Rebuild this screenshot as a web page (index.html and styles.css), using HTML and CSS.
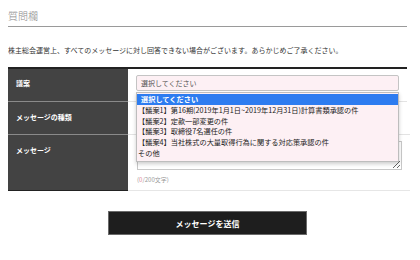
FILE: index.html
```html
<!DOCTYPE html>
<html lang="ja">
<head>
  <meta charset="UTF-8">
  <title>質問欄</title>
  <meta name="viewport" content="width=device-width, initial-scale=1">
  <link rel="stylesheet" href="styles.css">
</head>
<body>
  <div class="page">
    <h2 class="section-title">質問欄</h2>
    <p class="notice">株主総会運営上、すべてのメッセージに対し回答できない場合がございます。あらかじめご了承ください。</p>
    <form class="question-form">
      <div class="form-table">
        <div class="row row-proposal">
          <div class="label">議案</div>
          <div class="field">
            <div class="select-wrap">
              <div class="select">選択してください</div>
              <ul class="select-list">
                <li class="selected">選択してください</li>
                <li>【議案1】第16期(2019年1月1日~2019年12月31日)計算書類承認の件</li>
                <li>【議案2】定款一部変更の件</li>
                <li>【議案3】取締役7名選任の件</li>
                <li>【議案4】当社株式の大量取得行為に関する対応策承認の件</li>
                <li>その他</li>
              </ul>
            </div>
          </div>
        </div>
        <div class="row row-type">
          <div class="label">メッセージの種類</div>
          <div class="field">
            <div class="select"></div>
          </div>
        </div>
        <div class="row row-message">
          <div class="label">メッセージ</div>
          <div class="field">
            <textarea class="message"></textarea>
            <div class="counter">(<span>0</span>/200文字)</div>
          </div>
        </div>
      </div>
      <div class="actions">
        <button type="submit">メッセージを送信</button>
      </div>
    </form>
  </div>
</body>
</html>
```

FILE: styles.css
```css
body {
  margin: 8px;
  font-family: "Noto Sans CJK JP", "Noto Sans", sans-serif;
  background: #fff;
  color: #333;
}
.page {
  width: 399px;
}
.section-title {
  margin: 0;
  padding: 1px 0 3px;
  font-size: 10px;
  line-height: 14px;
  font-weight: 300;
  color: #888;
  border-bottom: 1px solid #9a9a9a;
}
.notice {
  margin: 18px 0 12px;
  font-size: 7px;
  line-height: 10px;
  color: #333;
  white-space: nowrap;
}
.form-table {
  border-top: 2px solid #222;
}
.row {
  display: grid;
  grid-template-columns: 120px 1fr;
}
.row + .row .label {
  border-top: 1px solid #8a8a8a;
}
.row + .row .field {
  border-top: 1px solid #e3e3e3;
}
.row:last-child .label {
  border-bottom: 1px solid #222;
}
.row:last-child .field {
  border-bottom: 1px solid #e6e6e6;
}
.label {
  background: #434343;
  color: #fff;
  font-size: 7px;
  font-weight: bold;
  line-height: 10px;
  padding: 9px 8px 0;
}
.row-type .label,
.row-message .label {
  padding-top: 10px;
}
.field {
  padding: 6px 8px 0;
}
.row-proposal {
  height: 32px;
}
.row-type {
  height: 33px;
}
.row-message {
  height: 57px;
}
.row-type .field {
  padding-top: 8px;
}
.select-wrap {
  position: relative;
}
.select {
  height: 16px;
  box-sizing: border-box;
  border: 1px solid #c4c4c4;
  border-radius: 2px;
  background: #fdf0f4;
  font-size: 7px;
  line-height: 14px;
  padding: 0 4px;
  color: #555;
}
.select-list {
  position: absolute;
  top: 17px;
  left: 0;
  right: 0;
  margin: 0;
  padding: 1px 0 2px;
  list-style: none;
  background: #fdf0f4;
  border: 1px solid #bdbdbd;
  box-shadow: 0 2px 4px rgba(0,0,0,0.2);
  z-index: 2;
}
.select-list li {
  font-size: 7.2px;
  line-height: 10.8px;
  height: 10.8px;
  padding: 0 4px 0 1px;
  color: #222;
  white-space: nowrap;
}
.select-list li.selected {
  background: #2d7cf0;
  color: #fff;
  font-weight: bold;
  padding-left: 4px;
}
.message {
  display: block;
  width: 265px;
  height: 29px;
  margin: 0 0 0 1px;
  box-sizing: border-box;
  border: 1px solid #c8c8c8;
  background: #fff;
  resize: vertical;
}
.counter {
  margin-top: 5px;
  font-size: 6px;
  line-height: 9px;
  color: #999;
  padding-left: 1px;
}
.counter span {
  color: #e58a9a;
}
.actions {
  display: flex;
  justify-content: center;
  margin-top: 20px;
}
.actions button {
  width: 199px;
  height: 24px;
  background: #1e1e1e;
  border: 1px solid #6a6a6a;
  color: #fff;
  font-family: inherit;
  font-size: 8px;
  font-weight: bold;
  cursor: pointer;
}
```
